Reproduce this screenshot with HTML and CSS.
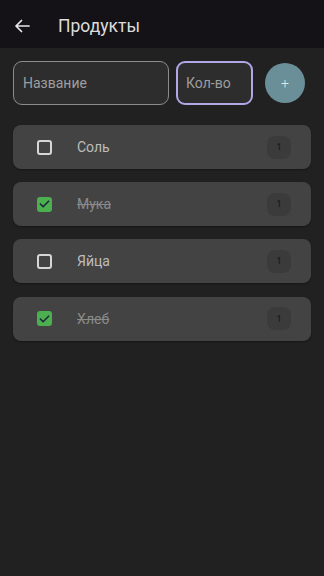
FILE: index.html
```html
<!DOCTYPE html>
<html lang="ru">
<head>
<meta charset="utf-8">
<link rel="stylesheet" href="styles.css">
</head>
<body>
<header class="appbar">
  <svg class="back" width="16" height="14" viewBox="0 0 16 14"><path d="M15 7H2M7.5 1.5L2 7l5.5 5.5" fill="none" stroke="#e8e8e8" stroke-width="1.7" stroke-linecap="round" stroke-linejoin="round"/></svg>
  <h1 class="title">Продукты</h1>
</header>
<main class="content">
  <div class="form-row">
    <div class="field field-name">Название</div>
    <div class="field field-qty">Кол-во</div>
    <button class="add-btn">+</button>
  </div>
  <ul class="list">
    <li class="item">
      <span class="check"></span>
      <span class="label">Соль</span>
      <span class="badge">1</span>
    </li>
    <li class="item done">
      <span class="check checked"><svg width="12" height="10" viewBox="0 0 12 10"><path d="M1.5 5l3 3 6-6" fill="none" stroke="#1e2a3a" stroke-width="1.8" stroke-linecap="round" stroke-linejoin="round"/></svg></span>
      <span class="label">Мука</span>
      <span class="badge">1</span>
    </li>
    <li class="item">
      <span class="check"></span>
      <span class="label">Яйца</span>
      <span class="badge">1</span>
    </li>
    <li class="item done">
      <span class="check checked"><svg width="12" height="10" viewBox="0 0 12 10"><path d="M1.5 5l3 3 6-6" fill="none" stroke="#1e2a3a" stroke-width="1.8" stroke-linecap="round" stroke-linejoin="round"/></svg></span>
      <span class="label">Хлеб</span>
      <span class="badge">1</span>
    </li>
  </ul>
</main>
</body>
</html>
```
FILE: styles.css
```css
* { box-sizing: border-box; }
html, body { margin: 0; padding: 0; }
body {
  width: 324px;
  height: 576px;
  background: #212121;
  font-family: Roboto, "Noto Sans", sans-serif;
  color: #e0e0e0;
  overflow: hidden;
}
.appbar {
  height: 48px;
  background: #141216;
  display: flex;
  align-items: center;
  padding-left: 14px;
  padding-top: 3px;
}
.back { display: block; margin-top: 1px; }
.title {
  margin: 0 0 0 28px;
  font-size: 17.5px;
  font-weight: 400;
  color: #dcdcdc;
}
.content { padding: 13px 13px 0; }
.form-row {
  display: flex;
  align-items: center;
}
.field {
  height: 44px;
  border-radius: 9px;
  background: #2d2d2d;
  display: flex;
  align-items: center;
  padding-left: 9px;
  font-size: 14px;
  color: #9e9e9e;
}
.field-name {
  width: 156px;
  border: 1px solid #8c8c8c;
}
.field-qty {
  width: 77px;
  margin-left: 7px;
  border: 2px solid #b3a6e6;
  padding-left: 8px;
}
.add-btn {
  width: 40px;
  height: 40px;
  border-radius: 50%;
  border: none;
  background: #6b8f99;
  color: #dfe8ea;
  font-family: inherit;
  font-size: 14px;
  font-weight: 300;
  line-height: 1;
  margin-left: 12px;
  padding: 0;
}
.list {
  list-style: none;
  margin: 20px 0 0;
  padding: 0;
  display: flex;
  flex-direction: column;
  gap: 13.2px;
}
.item {
  height: 44px;
  background: #434343;
  border-radius: 8px;
  display: flex;
  align-items: center;
  padding: 0 20px 0 24px;
  box-shadow: 0 1px 2px rgba(0,0,0,0.35);
}
.check {
  width: 15px;
  height: 15px;
  border: 2px solid #d6d6d6;
  border-radius: 3px;
  flex: none;
  display: flex;
  align-items: center;
  justify-content: center;
}
.check.checked {
  background: #4caf50;
  border-color: #4caf50;
}
.label {
  flex: 1;
  margin-left: 25px;
  font-size: 14px;
  color: #bdbdbd;
}
.done .label {
  color: #8a8a8a;
  text-decoration: line-through;
}
.badge {
  width: 24px;
  height: 23px;
  border-radius: 8px;
  background: #3b3b3b;
  color: #1c1c1c;
  font-size: 9px;
  font-weight: 500;
  display: flex;
  align-items: center;
  justify-content: center;
}
```
